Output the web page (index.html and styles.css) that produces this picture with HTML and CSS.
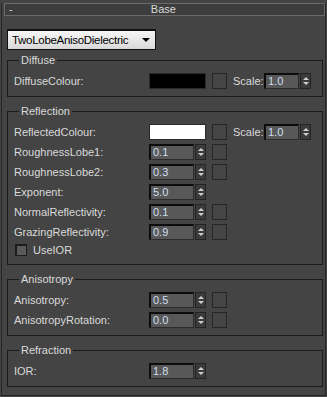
FILE: index.html
```html
<!DOCTYPE html>
<html lang="en">
<head>
    <meta charset="UTF-8">
    <title>Base</title>
    <link rel="stylesheet" href="styles.css">
</head>
<body>
    <div class="rollout">
        <div class="rollout-head">
            <span class="toggle">-</span>
            <span class="rollout-title">Base</span>
        </div>

        <div class="dropdown">
            <span>TwoLobeAnisoDielectric</span>
            <span class="drop-arrow"></span>
        </div>

        <div class="group">
            <div class="group-title">Diffuse</div>
            <div class="row">
                <span class="label">DiffuseColour:</span>
                <span class="swatch black"></span>
                <span class="map"></span>
                <span class="scale">Scale:</span>
                <span class="spinner small"><span class="spin-value">1.0</span><span class="spin-arrows"></span></span>
            </div>
        </div>

        <div class="group">
            <div class="group-title">Reflection</div>
            <div class="row">
                <span class="label">ReflectedColour:</span>
                <span class="swatch white"></span>
                <span class="map"></span>
                <span class="scale">Scale:</span>
                <span class="spinner small"><span class="spin-value">1.0</span><span class="spin-arrows"></span></span>
            </div>
            <div class="row">
                <span class="label">RoughnessLobe1:</span>
                <span class="spinner"><span class="spin-value">0.1</span><span class="spin-arrows"></span></span>
                <span class="map"></span>
            </div>
            <div class="row">
                <span class="label">RoughnessLobe2:</span>
                <span class="spinner"><span class="spin-value">0.3</span><span class="spin-arrows"></span></span>
                <span class="map"></span>
            </div>
            <div class="row">
                <span class="label">Exponent:</span>
                <span class="spinner"><span class="spin-value">5.0</span><span class="spin-arrows"></span></span>
            </div>
            <div class="row">
                <span class="label">NormalReflectivity:</span>
                <span class="spinner"><span class="spin-value">0.1</span><span class="spin-arrows"></span></span>
                <span class="map"></span>
            </div>
            <div class="row">
                <span class="label">GrazingReflectivity:</span>
                <span class="spinner"><span class="spin-value">0.9</span><span class="spin-arrows"></span></span>
                <span class="map"></span>
            </div>
            <div class="row check-row">
                <span class="checkbox"></span>
                <span>UseIOR</span>
            </div>
        </div>

        <div class="group">
            <div class="group-title">Anisotropy</div>
            <div class="row">
                <span class="label">Anisotropy:</span>
                <span class="spinner"><span class="spin-value">0.5</span><span class="spin-arrows"></span></span>
                <span class="map"></span>
            </div>
            <div class="row">
                <span class="label">AnisotropyRotation:</span>
                <span class="spinner"><span class="spin-value">0.0</span><span class="spin-arrows"></span></span>
                <span class="map"></span>
            </div>
        </div>

        <div class="group">
            <div class="group-title">Refraction</div>
            <div class="row">
                <span class="label">IOR:</span>
                <span class="spinner"><span class="spin-value">1.8</span><span class="spin-arrows"></span></span>
            </div>
        </div>
    </div>
</body>
</html>
```

FILE: styles.css
```css
body { margin: 0; background: #444444; font-family: "Liberation Sans", Arial, sans-serif; font-size: 11px; color: #dadada; }

.rollout { margin: 9px 1px 0 1px; padding-bottom: 8px; border: 1px solid #262626; border-top: none; }
.rollout-head { margin: -6px 0 0 2px; height: 13px; box-sizing: border-box; border: 1px solid #6a6a6a; background: #3d3d3d; display: flex; align-items: center; position: relative; line-height: 11px; }
.toggle { padding-left: 4px; }
.rollout-title { flex: 1; text-align: center; margin-right: 10px; }

.dropdown { margin: 13px 0 0 5px; width: 149px; height: 21px; box-sizing: border-box; border: 1px solid #111; border-top-width: 2px; background: linear-gradient(#f6f6f6, #d9d9d9); color: #000; font-size: 11.5px; letter-spacing: -0.3px; padding: 0 4px 0 4px; display: flex; align-items: center; justify-content: space-between; }
.drop-arrow { width: 0; height: 0; border-left: 4px solid transparent; border-right: 4px solid transparent; border-top: 4px solid #000; margin-right: 1px; }

.group { margin: 10px 2px 0 5px; padding: 0 6px 7px 6px; border: 1px solid #1b1b1b; }
.group + .group { margin-top: 14px; }
.group-title { display: table; margin: -7px 0 0 5px; padding: 0 2px; height: 13px; line-height: 13px; background: #444444; }
.group-title + .row { margin-top: 6px; }

.row { display: flex; align-items: center; height: 16px; margin-top: 4px; }
.label { width: 135px; }

.swatch { width: 57px; height: 16px; box-sizing: border-box; border: 1px solid #2a2a2a; }
.swatch.black { background: #000; }
.swatch.white { background: #fff; }

.map { width: 15px; height: 16px; box-sizing: border-box; margin-left: 6px; border: 1px solid #262626; background: #454545; }
.scale { margin-left: 6px; width: 31px; }

.spinner { display: flex; width: 57px; height: 16px; }
.spinner.small { width: 47px; }
.spin-value { flex: 1; box-sizing: border-box; border: 1px solid #2c2c2c; border-top: 2px solid #0c0c0c; border-left: 2px solid #0c0c0c; background: #585858; color: #cddff0; padding-left: 2px; line-height: 13px; margin-right: 1px; }
.spin-arrows { width: 11px; box-sizing: border-box; border: 1px solid #242424; background: #3b3b3b; display: flex; flex-direction: column; align-items: center; justify-content: space-between; padding: 3px 0 3px 0; }
.spin-arrows::before { content: ""; border-left: 3px solid transparent; border-right: 3px solid transparent; border-bottom: 3px solid #cfcfcf; }
.spin-arrows::after { content: ""; border-left: 3px solid transparent; border-right: 3px solid transparent; border-top: 3px solid #cfcfcf; }

.check-row { height: 13px; margin-top: 3px; margin-bottom: 1px; padding-left: 1px; }
.checkbox { width: 12px; height: 12px; box-sizing: border-box; border: 1px solid #1c1c1c; border-top-width: 2px; border-left-width: 2px; background: #5a5a5a; margin-right: 6px; }
```
